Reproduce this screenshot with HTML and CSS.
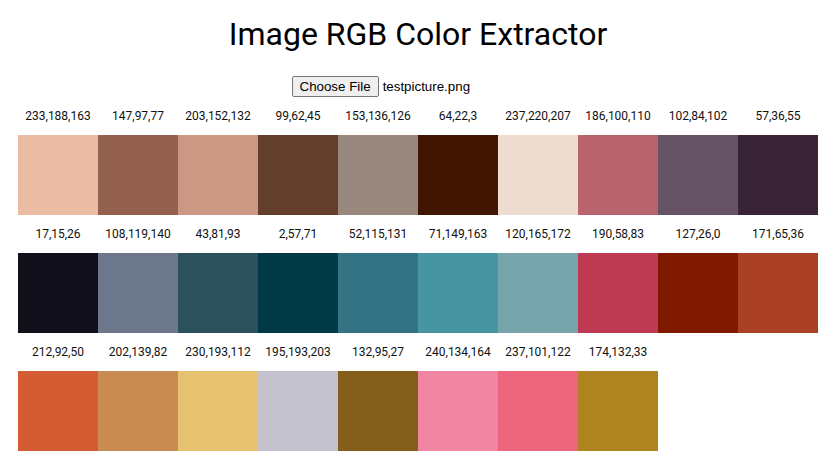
FILE: index.html
```html
<!DOCTYPE html>
<html>
<head>
<meta charset="utf-8">
<title>Image RGB Color Extractor</title>
<link rel="stylesheet" href="styles.css">
</head>
<body>
<h1 class="title">Image RGB Color Extractor</h1>
<div class="upload">
  <div class="file-input">
    <span class="file-btn">Choose File</span>
    <span class="file-name">testpicture.png</span>
  </div>
</div>
<div class="palette">
  <div class="cell"><div class="label">233,188,163</div><div class="swatch" style="background:rgb(233,188,163)"></div></div>
  <div class="cell"><div class="label">147,97,77</div><div class="swatch" style="background:rgb(147,97,77)"></div></div>
  <div class="cell"><div class="label">203,152,132</div><div class="swatch" style="background:rgb(203,152,132)"></div></div>
  <div class="cell"><div class="label">99,62,45</div><div class="swatch" style="background:rgb(99,62,45)"></div></div>
  <div class="cell"><div class="label">153,136,126</div><div class="swatch" style="background:rgb(153,136,126)"></div></div>
  <div class="cell"><div class="label">64,22,3</div><div class="swatch" style="background:rgb(64,22,3)"></div></div>
  <div class="cell"><div class="label">237,220,207</div><div class="swatch" style="background:rgb(237,220,207)"></div></div>
  <div class="cell"><div class="label">186,100,110</div><div class="swatch" style="background:rgb(186,100,110)"></div></div>
  <div class="cell"><div class="label">102,84,102</div><div class="swatch" style="background:rgb(102,84,102)"></div></div>
  <div class="cell"><div class="label">57,36,55</div><div class="swatch" style="background:rgb(57,36,55)"></div></div>
  <div class="cell"><div class="label">17,15,26</div><div class="swatch" style="background:rgb(17,15,26)"></div></div>
  <div class="cell"><div class="label">108,119,140</div><div class="swatch" style="background:rgb(108,119,140)"></div></div>
  <div class="cell"><div class="label">43,81,93</div><div class="swatch" style="background:rgb(43,81,93)"></div></div>
  <div class="cell"><div class="label">2,57,71</div><div class="swatch" style="background:rgb(2,57,71)"></div></div>
  <div class="cell"><div class="label">52,115,131</div><div class="swatch" style="background:rgb(52,115,131)"></div></div>
  <div class="cell"><div class="label">71,149,163</div><div class="swatch" style="background:rgb(71,149,163)"></div></div>
  <div class="cell"><div class="label">120,165,172</div><div class="swatch" style="background:rgb(120,165,172)"></div></div>
  <div class="cell"><div class="label">190,58,83</div><div class="swatch" style="background:rgb(190,58,83)"></div></div>
  <div class="cell"><div class="label">127,26,0</div><div class="swatch" style="background:rgb(127,26,0)"></div></div>
  <div class="cell"><div class="label">171,65,36</div><div class="swatch" style="background:rgb(171,65,36)"></div></div>
  <div class="cell"><div class="label">212,92,50</div><div class="swatch" style="background:rgb(212,92,50)"></div></div>
  <div class="cell"><div class="label">202,139,82</div><div class="swatch" style="background:rgb(202,139,82)"></div></div>
  <div class="cell"><div class="label">230,193,112</div><div class="swatch" style="background:rgb(230,193,112)"></div></div>
  <div class="cell"><div class="label">195,193,203</div><div class="swatch" style="background:rgb(195,193,203)"></div></div>
  <div class="cell"><div class="label">132,95,27</div><div class="swatch" style="background:rgb(132,95,27)"></div></div>
  <div class="cell"><div class="label">240,134,164</div><div class="swatch" style="background:rgb(240,134,164)"></div></div>
  <div class="cell"><div class="label">237,101,122</div><div class="swatch" style="background:rgb(237,101,122)"></div></div>
  <div class="cell"><div class="label">174,132,33</div><div class="swatch" style="background:rgb(174,132,33)"></div></div>
</div>
</body>
</html>
```
FILE: styles.css
```css
html, body {
  margin: 0;
  padding: 0;
  background: #fff;
}
body {
  font-family: Roboto, "Liberation Sans", sans-serif;
  color: #000;
}
.title {
  margin: 16px 0 0;
  font-size: 32px;
  font-weight: 400;
  text-align: center;
  line-height: 37px;
}
.upload {
  display: flex;
  justify-content: center;
  margin-top: 23px;
}
.file-input {
  width: 253px;
  display: flex;
  align-items: center;
  font-family: "Liberation Sans", Arial, sans-serif;
  font-size: 13.33px;
}
.file-btn {
  box-sizing: border-box;
  height: 21px;
  padding: 0 7px;
  display: flex;
  align-items: center;
  background: #efefef;
  border: 1px solid #767676;
  border-radius: 2px;
  color: #000;
}
.file-name {
  margin-left: 4px;
  color: #000;
}
.palette {
  width: 800px;
  margin: 0 auto;
  display: grid;
  grid-template-columns: repeat(10, 80px);
}
.cell {
  display: flex;
  flex-direction: column;
}
.label {
  height: 38px;
  display: flex;
  align-items: center;
  justify-content: center;
  font-size: 12px;
  color: #111;
}
.swatch {
  height: 80px;
}
```
